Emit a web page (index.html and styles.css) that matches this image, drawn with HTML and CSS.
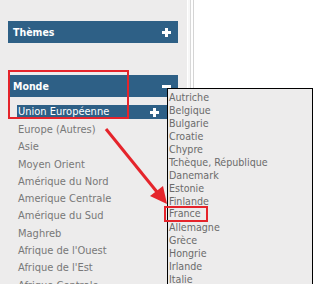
FILE: index.html
```html
<!DOCTYPE html>
<html lang="fr">
<head>
    <meta charset="UTF-8">
    <title>Monde</title>
    <link rel="stylesheet" href="styles.css">
</head>
<body>
    <div class="page">
        <div class="sidebar">
            <div class="bar">
                <span>Thèmes</span>
                <span class="icon plus"></span>
            </div>

            <div class="bar monde">
                <span>Monde</span>
                <span class="icon minus"></span>
            </div>
            <ul class="regions">
                <li class="current"><span>Union Européenne</span><span class="icon plus"></span></li>
                <li>Europe (Autres)</li>
                <li>Asie</li>
                <li>Moyen Orient</li>
                <li>Amérique du Nord</li>
                <li>Amerique Centrale</li>
                <li>Amérique du Sud</li>
                <li>Maghreb</li>
                <li>Afrique de l'Ouest</li>
                <li>Afrique de l'Est</li>
                <li>Afrique Centrale</li>
            </ul>
        </div>
        <div class="divider"></div>
        <div class="main"></div>
    </div>

    <!-- annotations drawn over the page -->
    <div class="mark mark-monde"></div>
    <ul class="countries">
        <li>Autriche</li>
        <li>Belgique</li>
        <li>Bulgarie</li>
        <li>Croatie</li>
        <li>Chypre</li>
        <li>Tchèque, République</li>
        <li>Danemark</li>
        <li>Estonie</li>
        <li>Finlande</li>
        <li><span class="mark-france">France</span></li>
        <li>Allemagne</li>
        <li>Grèce</li>
        <li>Hongrie</li>
        <li>Irlande</li>
        <li>Italie</li>
    </ul>
    <svg class="arrow" width="317" height="284" viewBox="0 0 317 284">
        <line x1="106" y1="129" x2="157" y2="192" stroke="#e5242b" stroke-width="3"/>
        <polygon points="167,204 150,196 163,186" fill="#e5242b"/>
    </svg>
</body>
</html>
```

FILE: styles.css
```css
body { margin: 0; font-family: Tahoma, "DejaVu Sans Condensed", sans-serif; overflow: hidden; }

.page { display: flex; height: 284px; }
.sidebar { width: 170px; background: #edecec; padding: 21px 9px 0 8px; }
.divider { width: 5px; border-left: 1px solid #fff; border-right: 1px solid #d4d4d4; background: #f7f7f7; box-shadow: inset -2px 0 0 #fff, inset -3px 0 0 #d8d8d8; }
.main { flex: 1; background: #fff; }

.bar { display: flex; justify-content: space-between; align-items: center; height: 22px; padding: 0 7px 0 5px; background: #2e6086; color: #fff; font-weight: bold; font-size: 10.5px; }
.bar.monde { margin-top: 32px; }

.icon { position: relative; width: 9px; height: 9px; }
.icon::before, .icon::after { content: ""; position: absolute; background: #fff; }
.icon::before { left: 0; right: 0; top: 3px; height: 3px; }
.plus::after { top: 0; bottom: 0; left: 3px; width: 3px; }

.regions { list-style: none; margin: 8px 0 0 0; padding: 0; font-size: 11px; color: #787878; }
.regions li { height: 17.3px; line-height: 17px; padding-left: 10px; }
.regions li.current { display: flex; justify-content: space-between; align-items: center; height: 14px; line-height: 14px; margin-bottom: 2px; background: #2e6086; color: #fff; padding-right: 19px; margin-left: 9px; padding-left: 1px; }

.mark { position: absolute; border: 2px solid #e5242b; }
.mark-monde { left: 8px; top: 70px; width: 117px; height: 45px; }

.countries { position: absolute; left: 167px; top: 88px; width: 143px; height: 200px; margin: 0; padding: 2px 0 0 1px; list-style: none; background: #edecec; border: 1px solid #000; font-size: 10.6px; color: #6b6b6b; }
.countries li { height: 13px; line-height: 13px; }
.mark-france { display: inline-block; margin: -2px 0 0 -5px; padding: 0 5px 1px 3px; border: 2px solid #e5242b; line-height: 11px; vertical-align: top; }

.arrow { position: absolute; left: 0; top: 0; pointer-events: none; }
```
